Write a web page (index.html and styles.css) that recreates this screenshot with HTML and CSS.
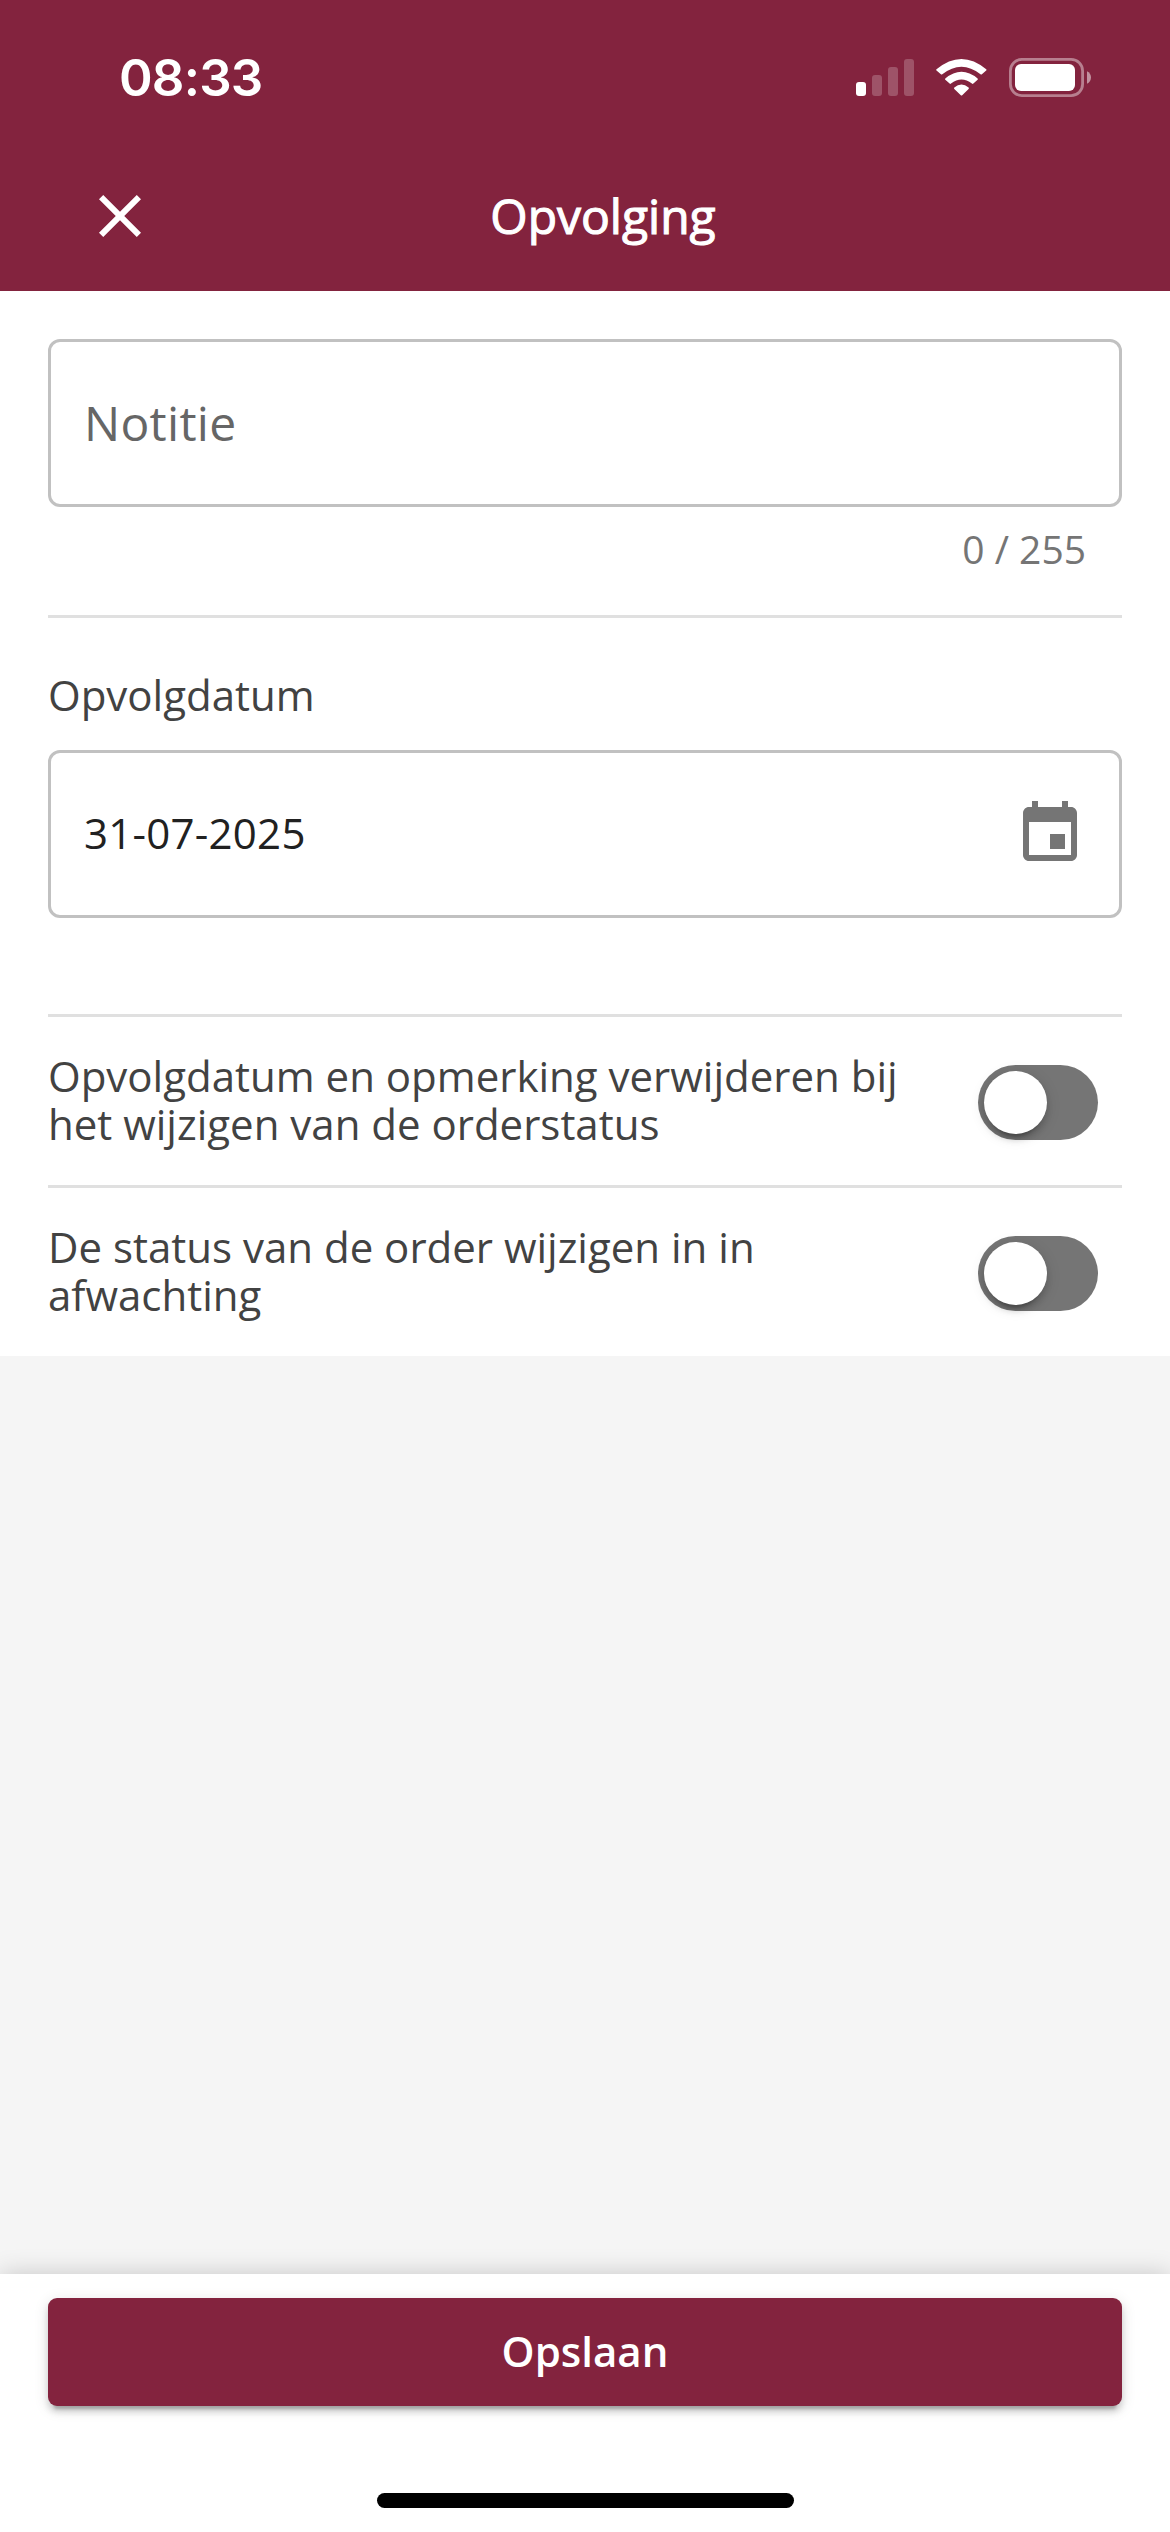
FILE: index.html
```html
<!DOCTYPE html>
<html lang="nl">
<head>
<meta charset="utf-8">
<title>Opvolging</title>
<link rel="stylesheet" href="styles.css">
</head>
<body>
<div class="screen">
  <header class="header">
    <div class="status-bar">
      <span class="clock">08:33</span>
      <svg class="status-icons" width="240" height="48" viewBox="852 54 240 48" fill="#fff">
        <rect x="856" y="82" width="10" height="14" rx="3"/>
        <g fill-opacity=".22">
          <rect x="872" y="75" width="10" height="21" rx="3"/>
          <rect x="888" y="67" width="10" height="29" rx="3"/>
          <rect x="904" y="59" width="10" height="37" rx="3"/>
        </g>
        <path d="M936.5 69.2 Q961.5 48.6 986.2 69.2 Q986.8 69.9 986.2 70.6 L981.9 74.3 Q981.2 74.9 980.5 74.3 Q961.5 59.3 942.3 74.3 Q941.6 74.9 940.9 74.3 L936.5 70.6 Q935.9 69.9 936.5 69.2Z"/>
        <path d="M945.3 78.5 Q961.5 65.1 977.6 78.5 Q978.2 79.2 977.6 79.8 L973.4 83.6 Q972.6 84.2 971.9 83.6 Q961.5 75.6 951 83.6 Q950.3 84.2 949.6 83.6 L945.3 79.8 Q944.7 79.2 945.3 78.5Z"/>
        <path d="M954.3 87.6 Q961.5 81.4 968.6 87.6 Q969.2 88.2 968.6 88.9 L962.2 95.2 Q961.5 95.9 960.8 95.2 L954.3 88.9 Q953.7 88.2 954.3 87.6Z"/>
        <rect x="1010.4" y="59.4" width="72.2" height="36.2" rx="11.5" fill="none" stroke="#fff" stroke-width="2.8" stroke-opacity=".42"/>
        <rect x="1015" y="64" width="60" height="27" rx="6"/>
        <path d="M1087 71.3c2.4 1 4 3.4 4 6.2s-1.6 5.200-4 6.200z" fill-opacity=".5"/>
      </svg>
    </div>
    <div class="toolbar">
      <svg class="close" viewBox="0 0 24 24"><path d="M19 6.410L17.590 5 12 10.590 6.410 5 5 6.410 10.590 12 5 17.590 6.410 19 12 13.410 17.590 19 19 17.590 13.410 12z"/></svg>
      <h1 class="title">Opvolging</h1>
    </div>
  </header>

  <main class="form">
    <section class="note">
      <div class="field"><span class="placeholder">Notitie</span></div>
      <div class="counter">0 / 255</div>
    </section>
    <section class="date">
      <div class="label">Opvolgdatum</div>
      <div class="field">
        <span class="value">31-07-2025</span>
        <svg class="calendar" viewBox="0 0 24 24"><path d="M17 12h-5v5h5v-5zM16 1v2H8V1H6v2H5c-1.110 0-1.990.9-1.990 2L3 19c0 1.100.89 2 2 2h14c1.100 0 2-.9 2-2V5c0-1.100-.9-2-2-2h-1V1h-2zm3 18H5V8h14v11z"/></svg>
      </div>
    </section>
    <section class="option">
      <span class="option-text">Opvolgdatum en opmerking verwijderen bij het wijzigen van de orderstatus</span>
      <span class="toggle"><span class="knob"></span></span>
    </section>
    <section class="option">
      <span class="option-text">De status van de order wijzigen in in afwachting</span>
      <span class="toggle"><span class="knob"></span></span>
    </section>
  </main>

  <footer class="footer">
    <div class="save">Opslaan</div>
    <div class="home-indicator"></div>
  </footer>
</div>
</body>
</html>
```

FILE: styles.css
```css
* { box-sizing: border-box; }

body {
  margin: 0;
  font-family: "Open Sans", sans-serif;
  font-size: 42px;
  line-height: 48px;
  color: #424242;
}

.screen {
  display: flex;
  flex-direction: column;
  width: 1170px;
  height: 2532px;
  background: #f5f5f5;
  overflow: hidden;
}

.header {
  height: 291px;
  background: #83233e;
  color: #fff;
}

.status-bar {
  display: flex;
  justify-content: space-between;
  align-items: center;
  height: 156px;
  padding: 0 78px 0 119px;
}

.clock {
  font-family: Inter, sans-serif;
  font-size: 51px;
  font-weight: 600;
  letter-spacing: -0.8px;
}

.toolbar {
  display: grid;
  grid-template-columns: 72px 1fr;
  align-items: center;
  height: 120px;
  padding: 0 120px 0 84px;
}

.close {
  width: 72px;
  height: 72px;
  fill: #fff;
}

.title {
  margin: 0;
  text-align: center;
  font-size: 48px;
  font-weight: 400;
  line-height: 60px;
  -webkit-text-stroke: 1.1px #fff;
}

.form {
  padding: 48px 48px 0;
  background: #fff;
}

.field {
  display: flex;
  align-items: center;
  justify-content: space-between;
  height: 168px;
  padding: 0 33px;
  border: 3px solid #c1c1c1;
  border-radius: 12px;
}

.note {
  height: 279px;
  border-bottom: 3px solid #e0e0e0;
}

.placeholder {
  font-size: 48px;
  letter-spacing: 0.3px;
  color: #666;
}

.counter {
  padding: 18px 36px 0 0;
  text-align: right;
  font-size: 39px;
  color: #757575;
}

.date {
  height: 399px;
  padding-top: 53px;
  border-bottom: 3px solid #e0e0e0;
}

.label {
  height: 79px;
}

.value {
  padding-bottom: 2px;
  letter-spacing: 0.25px;
  color: #212121;
}

.calendar {
  width: 72px;
  height: 72px;
  fill: #757575;
}

.option {
  display: flex;
  align-items: flex-start;
  justify-content: space-between;
  height: 171px;
  padding: 35px 24px 0 0;
  border-bottom: 3px solid #e0e0e0;
}

.option:last-child {
  height: 168px;
  border-bottom: 0;
}

.option-text {
  width: 880px;
}

.toggle {
  width: 120px;
  height: 75px;
  margin-top: 13px;
  padding: 6px;
  border-radius: 38px;
  background: #757575;
}

.knob {
  display: block;
  width: 63px;
  height: 63px;
  border-radius: 50%;
  background: #fff;
  box-shadow: 0 9px 3px -6px rgba(0, 0, 0, 0.2), 0 6px 6px rgba(0, 0, 0, 0.14), 0 3px 15px rgba(0, 0, 0, 0.12);
}

.footer {
  display: flex;
  flex-direction: column;
  align-items: center;
  height: 258px;
  margin-top: auto;
  padding: 24px 48px;
  background: #fff;
  box-shadow: 0 0 24px rgba(0, 0, 0, 0.19);
}

.save {
  display: flex;
  align-items: center;
  justify-content: center;
  width: 100%;
  height: 108px;
  padding-bottom: 2px;
  border-radius: 9px;
  background: #83233e;
  color: #fff;
  font-weight: 600;
  box-shadow: 0 9px 3px -6px rgba(0, 0, 0, 0.2), 0 6px 6px rgba(0, 0, 0, 0.14), 0 3px 15px rgba(0, 0, 0, 0.12);
}

.home-indicator {
  width: 417px;
  height: 15px;
  margin-top: 87px;
  flex-shrink: 0;
  border-radius: 8px;
  background: #000;
}
```
